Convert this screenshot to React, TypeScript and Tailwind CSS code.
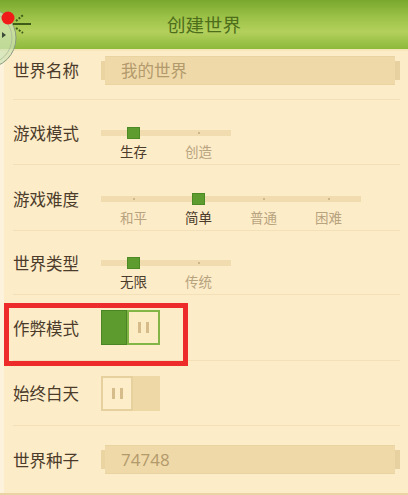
const FONT = { fontFamily: '"Noto Sans CJK SC", "Noto Sans", sans-serif' }

function Slider({ options, selected }: { options: string[]; selected: number }) {
  return (
    <div className="flex flex-col">
      <div className="flex h-[20px] items-center">
        <div className="flex h-[6px] bg-[#f0dcae]">
          {options.map((o, i) => (
            <div key={o} className="flex w-[65px] items-center justify-center">
              {i === selected ? (
                <div className="h-[12px] w-[13px] shrink-0 border border-[#4c8a25] bg-[#5e9c30]" />
              ) : (
                <div className="h-[2px] w-[2px] bg-[#cdb78c]" />
              )}
            </div>
          ))}
        </div>
      </div>
      <div className="flex">
        {options.map((o, i) => (
          <span
            key={o}
            className={`w-[65px] text-center text-[13.5px] leading-[16px] ${
              i === selected ? 'text-[#4b3b2a]' : 'text-[#b8a37f]'
            }`}
          >
            {o}
          </span>
        ))}
      </div>
    </div>
  )
}

function Bars() {
  return (
    <div className="flex gap-[5px]">
      <div className="h-[11px] w-[3px] bg-[#d5bc8a]" />
      <div className="h-[11px] w-[3px] bg-[#d5bc8a]" />
    </div>
  )
}

function Toggle({ on }: { on: boolean }) {
  if (on) {
    return (
      <div className="flex h-[35px] w-[59px]">
        <div className="w-[26px] border border-[#4a8524] bg-[#5d9b2f]" />
        <div className="flex flex-1 items-center justify-center border-2 border-[#82b545] bg-[#fcecc4]">
          <Bars />
        </div>
      </div>
    )
  }
  return (
    <div className="flex h-[35px] w-[59px]">
      <div className="flex w-[32px] items-center justify-center border-2 border-[#e6d09e] bg-[#fdeec9]">
        <Bars />
      </div>
      <div className="flex-1 bg-[#edd8a6]" />
    </div>
  )
}

function Field({ value, numeric }: { value: string; numeric?: boolean }) {
  return (
    <div className="flex flex-1 items-center">
      <div className="h-[19px] w-[4px] bg-[#ead4a2]" />
      <div className="flex h-[29px] flex-1 items-center border-y border-[#e9d3a1] bg-[#efd9a9] pl-[16px]">
        <span
          className={numeric ? 'text-[17px] text-[#b39a6c]' : 'text-[16.5px] text-[#b39a6c]'}
          style={numeric ? { fontFamily: '"Open Sans", sans-serif' } : undefined}
        >
          {value}
        </span>
      </div>
      <div className="h-[19px] w-[5px] bg-[#e8d1a0]" />
    </div>
  )
}

function Label({ children }: { children: string }) {
  return <span className="w-[88px] shrink-0 text-[16.5px] leading-[20px] text-[#4b3b2a]">{children}</span>
}

export default function App() {
  return (
    <div className="flex h-[495px] w-[408px] flex-col overflow-hidden bg-[#fdecc8]" style={FONT}>
      {/* Header */}
      <div className="relative flex h-[49px] shrink-0 items-center justify-center bg-[linear-gradient(180deg,#79a72e_0%,#9cc248_35%,#b3d05c_65%,#8cb93b_100%)]">
        <span className="text-[18.5px] text-[#4d6e1b]">创建世界</span>
        <svg className="absolute left-0 top-0" width="40" height="70" viewBox="0 0 40 70">
          <circle cx="-14" cy="38" r="30" fill="#cfe3b4" fillOpacity="0.75" stroke="#8a9a80" strokeWidth="1" />
          <circle cx="-14" cy="38" r="26" fill="none" stroke="#a8b898" strokeWidth="0.8" />
          <path d="M2 32 L6 35 L2 38 Z" fill="#3c4a38" />
          <path d="M13 24 H31" stroke="#3e5c18" strokeWidth="2" />
          <path d="M16 21 L23 15" stroke="#3e5c18" strokeWidth="2" strokeDasharray="2 1.5" />
          <path d="M16 28 L23 33" stroke="#3e5c18" strokeWidth="2" strokeDasharray="2 1.5" />
          <circle cx="8" cy="18" r="6.5" fill="#f01a18" />
        </svg>
      </div>
      <div className="h-[2px] shrink-0 bg-[#f6e6b8]" />

      <div className="flex flex-1 flex-col border-l-[4px] border-[#fdf2dc] pl-[9px] pr-[8px]">
        {/* 世界名称 */}
        <div className="flex h-[49px] items-center border-b border-[#f3dfb8] pb-[10px]">
          <Label>世界名称</Label>
          <Field value="我的世界" />
        </div>

        {/* 游戏模式 */}
        <div className="flex h-[65px] items-start border-b border-[#f3dfb8] pt-[23px]">
          <Label>游戏模式</Label>
          <Slider options={['生存', '创造']} selected={0} />
        </div>

        {/* 游戏难度 */}
        <div className="flex h-[66px] items-start border-b border-[#f3dfb8] pt-[24px]">
          <Label>游戏难度</Label>
          <Slider options={['和平', '简单', '普通', '困难']} selected={1} />
        </div>

        {/* 世界类型 */}
        <div className="flex h-[64px] items-start border-b border-[#f3dfb8] pt-[22px]">
          <Label>世界类型</Label>
          <Slider options={['无限', '传统']} selected={0} />
        </div>

        {/* 作弊模式 */}
        <div className="relative flex h-[66px] items-center border-b border-[#f3dfb8]">
          <Label>作弊模式</Label>
          <Toggle on />
          <div className="absolute left-[-9px] top-[8px] h-[63px] w-[184px] border-[5px] border-[#ee2b2b]" />
        </div>

        {/* 始终白天 */}
        <div className="flex h-[65px] items-center border-b border-[#f3dfb8]">
          <Label>始终白天</Label>
          <Toggle on={false} />
        </div>

        {/* 世界种子 */}
        <div className="flex flex-1 items-center">
          <Label>世界种子</Label>
          <Field value="74748" numeric />
        </div>
      </div>
      <div className="h-[2px] shrink-0 bg-[#ead3a2]" />
    </div>
  )
}
